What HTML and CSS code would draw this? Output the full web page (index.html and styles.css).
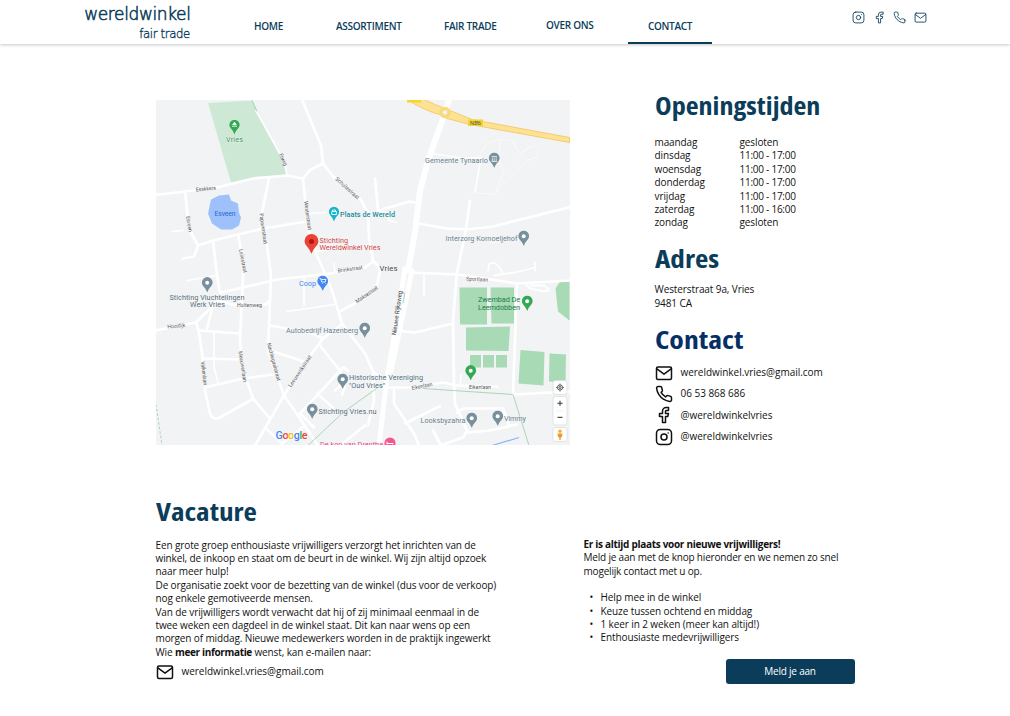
FILE: index.html
```html
<!DOCTYPE html>
<html lang="nl">
<head>
<meta charset="utf-8">
<title>Wereldwinkel Vries - Contact</title>
<link rel="stylesheet" href="styles.css">
</head>
<body>
<svg class="defs" width="0" height="0" aria-hidden="true">
  <symbol id="i-mail" viewBox="0 0 24 24"><rect x="2" y="4" width="20" height="16.500" rx="2"/><path d="M2.500 6.500 12 13.500l9.500-7"/></symbol>
  <symbol id="i-phone" viewBox="0 0 24 24"><path d="M22 16.920v3a2 2 0 0 1-2.180 2 19.790 19.790 0 0 1-8.630-3.070 19.500 19.500 0 0 1-6-6 19.790 19.790 0 0 1-3.070-8.670A2 2 0 0 1 4.110 2h3a2 2 0 0 1 2 1.720c.127.960.361 1.903.700 2.810a2 2 0 0 1-.450 2.110L8.090 9.910a16 16 0 0 0 6 6l1.270-1.270a2 2 0 0 1 2.110-.450c.907.339 1.850.573 2.810.700A2 2 0 0 1 22 16.920z"/></symbol>
  <symbol id="i-fb" viewBox="0 0 24 24"><path d="M18 2h-3a5 5 0 0 0-5 5v3H6v4h4v8h4v-8h3l1-4h-4V7a1 1 0 0 1 1-1h3z"/></symbol>
  <symbol id="i-insta" viewBox="0 0 24 24"><rect x="2" y="2" width="20" height="20" rx="5"/><circle cx="12" cy="12" r="4"/><path d="M17.500 6.500h.010"/></symbol>
  <symbol id="pin" viewBox="0 0 12 17"><path d="M6 0a5.600 5.600 0 0 1 5.600 5.600C11.600 9.500 7.500 11 6.300 15.600H5.700C4.500 11 .400 9.500.400 5.600A5.600 5.600 0 0 1 6 0z"/></symbol>
</svg>

<header class="topbar">
  <a class="logo"><span class="logo-main">wereldwinkel</span><span class="logo-sub">fair trade</span></a>
  <nav class="nav">
    <a class="n-home">HOME</a><a class="n-assort">ASSORTIMENT</a><a class="n-fair">FAIR TRADE</a><a class="n-over">OVER ONS</a><a class="n-contact">CONTACT</a>
  </nav>
  <div class="social">
    <svg><use href="#i-insta"/></svg><svg><use href="#i-fb"/></svg><svg><use href="#i-phone"/></svg><svg><use href="#i-mail"/></svg>
  </div>
</header>

<main>
  <section class="top">
    <svg class="map" viewBox="156 99.500 414 345">
      <rect x="155" y="99" width="415" height="346" fill="#f1f3f4"/>
      <path fill="#cde8d5" d="M208 102.500 252 100 263 121 277 147 287 174 253 178 231 182z"/>
      <path fill="#9fc1fb" d="M211 199 219 195 229 194 231 200 238 203 239 212 241 217 239 225 232 229 221 229 212 223 208 213z"/>
      <g fill="#a8dab5">
        <path d="M459.500 287H487v37H460zM490.500 287H514v36H491.500zM466 327 510 326 508.500 350.500 466 350zM470 354.500H481V367H470zM483 354.500H494V367H483zM496 354.500H507V367H496zM520.500 349.500 544.500 351.500 543.500 385 518.500 383zM549.500 353 566 354 565.500 382 549 381zM569.500 281H560L555.500 288 558 311 569.500 320z"/>
      </g>
      <g class="roads">
        <g class="r3">
          <path d="M155 194.500 185 191 217 187 253 178 287 175 303 178 310 169.500 323 163"/>
          <path d="M302 99 321 145 323 163 333 176 360 198 368 212 369 238 373 260 380 268"/>
          <path class="thin" d="M256 110 277 148 285 163 287 175"/>
          <path d="M185 191 189 228 198 245 194 256 183 258M198 245 213 240 238 234 263 228 307 221"/>
          <path d="M303 178 308 228 317 255 325 273 332 290 342 323 365 353 373 371 383 379"/>
          <path d="M269 178 261 217 267 245 271 275 268 350 284 395 298 415 318 445"/>
          <path d="M238 234 244 265 243 277 240 337 242 367 253 398 270 418"/>
          <path d="M213 240 217 275 220 293M221 292 243 287 277 279 330 273 365 267 373 261"/>
          <path d="M155 330 196 322 218 300 232 304 266 304 270 299M213 305 207 328"/>
          <path d="M196 322 199 332 203 360 205 390 210 413Q212 419 218 418L252 399"/>
          <path d="M199 330 240 333M202 358 240 359M205 387 243 378 273 374"/>
          <path d="M255 445 284 395 308 358 323 338 343 323"/>
          <path d="M270 325 313 333 323 338M270 350 307 362M320 345 340 370M300 413 343 367 348 370M317 393 333 407M340 372 345 379 341 385 335 390M345 386 342 394"/>
          <path d="M265 427 282 443 305 425 298 415M300 413 314 427M340 311 365 297 377 285 380 270M340 445 365 425"/>
          <path d="M375 178 378 210 410 201 415 202M418 223 447 228 467 229 493 226 570 206.500M470 200 466 229 457 272 453 320 454 380 455 403 467 430 463 437 440 445M410 272 457 274 517 283 570 280"/>
          <path d="M517 283 513 394 570 391M395 330 415 332 453 323M385 387 410 387 443 382 457 385 497 386"/>
          <path d="M394 388 394 403 414 433 419 445M405 423 437 407 440 406M457 412 463 408 503 408 509 424M467 432 490 430 517 424M433 430 441 445M373 371 374 400 368 425"/>
          <path class="thin" d="M494 275 515 272 535 267M525 283 530 288 544 291 549 290 545 285 530 285M488 270 489 264Q494 259 501 269L503 274M535 270 535 262"/>
        </g>
        <g class="r2">
          <path d="M310 213 325 212M187 280 217 275M172 231 183 230M214 331 214 367 218 382M287 311 335 304M304 305 304 275M432 153 463 158 481 157 475 192M378 210 388 213 389 220 396 222M460 385 461 374M424 273 424 295M317 251 337 247M334 263 335 272"/>
        </g>
        <path class="r1" d="M475 192 495 194 504 171 499 160 500 139 512 140 520 153 533 145Q542 148 536 157L527 160 502 184 495 194M490 227 490 242 500 242M480 155 486 144 497 139"/>
        <path class="r5" d="M449 99 443 118 429 157 420 190 415 232 408 270"/>
        <path class="r7" d="M405 268 396 325 386 385 379 445M412 270 400 328 391 370"/>
      </g>
      <path d="M407 99Q426 111 440 114L447 118 470 124 569.500 142V137L472 119 450 110Q434 104 424 99z" fill="#fde293" stroke="#f4c35c" stroke-width=".8"/>
      <circle cx="445" cy="112" r="4" fill="#f1f3f4" stroke="#fad978" stroke-width="3.500"/>
      <path d="M407 99h14v3h-14z" fill="#f6d62c"/><rect x="468" y="119" width="15" height="6.500" fill="#f6d32b"/>
      <g fill="none" stroke="#8cc99b" stroke-width=".7">
        <path d="M308 445 343 412 382 384M423 388 513 394 529 445"/><path d="M156 404 162 445" stroke-dasharray="2.500 2"/><path d="M403 303 405 292M252 100 257 111"/>
      </g>
      <path d="M492 445 519 437" stroke="#8ab4f8" stroke-width="1.200"/>

      <g class="street">
        <text x="196" y="191" textLength="20" transform="rotate(-5 196 191)">Esakkers</text>
        <text x="279" y="154" textLength="13" transform="rotate(66 279 154)">Esweg</text>
        <text x="335" y="179" textLength="30" transform="rotate(42 335 179)">Schultestraat</text>
        <text x="304" y="201" textLength="29" transform="rotate(82 304 201)">Westerstraat</text>
        <text x="259.500" y="213" textLength="31" transform="rotate(82 259.500 213)">Papaverstraat</text>
        <text x="186" y="216" textLength="16" transform="rotate(80 186 216)">Esveen</text>
        <text x="239" y="249" textLength="24" transform="rotate(79 239 249)">Leliestraat</text>
        <text x="338" y="272" textLength="25" transform="rotate(-8 338 272)">Brinkstraat</text>
        <text x="357" y="303" textLength="26" transform="rotate(-35 357 303)">Marksestraat</text>
        <text x="237" y="306" textLength="25">Holtenweg</text>
        <text x="167.500" y="328" textLength="18" transform="rotate(-5 167.500 328)">Hooidijk</text>
        <text x="201" y="361" textLength="24" transform="rotate(84 201 361)">Valkenlaan</text>
        <text x="238.500" y="351" textLength="31" transform="rotate(81 238.500 351)">Meeuwenlaan</text>
        <text x="267" y="343" textLength="39" transform="rotate(75 267 343)">Nachtegaalstraat</text>
        <text x="291" y="387" textLength="37" transform="rotate(-56 291 387)">Leeuwerikstraat</text>
        <text x="466" y="280" textLength="22" transform="rotate(3 466 280)">Sportlaan</text>
        <text x="412" y="389.500" textLength="21" transform="rotate(-11 412 389.500)">Eikenlaan</text>
        <text x="469" y="388" textLength="22">Eikenlaan</text>
        <text class="shield" x="470" y="124.300" textLength="11">N386</text>
        <text class="major" x="396" y="335" textLength="45" transform="rotate(-82 396 335)">Nieuwe Rijksweg</text>
      </g>

      <use href="#pin" x="229" y="119" width="11" height="16" fill="#34a853"/>
      <path d="M234.500 121.500 236.500 124.500H232.500zM232 126h5" fill="#fff" stroke="#fff" stroke-width=".6"/>
      <use href="#pin" x="328.500" y="206" width="11" height="16" fill="#12b5cb"/>
      <path d="M331.800 211h4.600v3h-4.600zM332.500 211v-1.500h3v1.500" fill="none" stroke="#fff" stroke-width=".9"/>
      <use href="#pin" x="304" y="233.500" width="15" height="21" fill="#ea4335"/><circle cx="311.500" cy="241" r="2.500" fill="#b31412"/>
      <g fill="#78909c">
        <use href="#pin" x="488.500" y="152" width="11.500" height="16.500"/><use href="#pin" x="518" y="230" width="11.500" height="16.500"/>
        <use href="#pin" x="201.500" y="276.500" width="11.500" height="16.500"/><use href="#pin" x="359" y="322" width="11.500" height="16.500"/>
        <use href="#pin" x="337" y="373" width="11.500" height="16.500"/><use href="#pin" x="306.500" y="403" width="11.500" height="16.500"/>
        <use href="#pin" x="466" y="412" width="11.500" height="16.500"/><use href="#pin" x="492" y="410" width="11.500" height="16.500"/>
      </g>
      <path d="M491.500 156h5.500M492.300 157v4M494.200 157v4M496.200 157v4M491.500 161h5.500" stroke="#fff" stroke-width=".7"/>
      <g fill="#34a853"><use href="#pin" x="521.500" y="295" width="11.500" height="16.500"/><use href="#pin" x="465" y="364.500" width="11.500" height="16.500"/></g>
      <g fill="#fff"><circle cx="523.700" cy="235.800" r="2"/><circle cx="207.200" cy="282.200" r="2"/><circle cx="364.700" cy="327.700" r="2"/><circle cx="342.700" cy="378.700" r="2"/><circle cx="312.200" cy="408.700" r="2"/><circle cx="471.700" cy="417.700" r="2"/><circle cx="497.700" cy="415.700" r="2"/><circle cx="527.200" cy="300.700" r="2"/><circle cx="470.700" cy="370.200" r="2"/></g>
      <use href="#pin" x="317" y="275" width="11.500" height="16.500" fill="#4285f4"/>
      <path d="M319.500 278h1.200l1 3.500h3.500l.8-2.600h-4.800M322 283h.5M325 283h.5" fill="none" stroke="#fff" stroke-width=".9"/>
      <path d="M384.500 445v-2.500a5.500 5.500 0 0 1 11 0V445z" fill="#f6568f"/><path d="M387 444v-3M387 443h6v1" stroke="#fff" fill="none"/>

      <g class="poi">
        <text x="226" y="141" textLength="17" fill="#34945a">Vries</text>
        <text class="water" x="214.500" y="215" textLength="21" fill="#2868c8">Esveen</text>
        <text class="b" x="340" y="216.500" textLength="55" fill="#168b9a">Plaats de Wereld</text>
        <text x="319.500" y="242" textLength="28.500" fill="#d13e3e">Stichting</text>
        <text x="319.500" y="249.500" textLength="61" fill="#d13e3e">Wereldwinkel Vries</text>
        <text x="425" y="162.500" textLength="63" fill="#69818e">Gemeente Tynaarlo</text>
        <text x="445.500" y="240.500" textLength="72" fill="#69818e">Interzorg Kornoeljehof</text>
        <text class="town" x="379.500" y="270.500" textLength="18" fill="#45494d">Vries</text>
        <text x="299" y="285" textLength="17" fill="#4285f4">Coop</text>
        <text x="169.500" y="299" textLength="75" fill="#536d79">Stichting Vluchtelingen</text>
        <text x="190" y="306.500" textLength="35" fill="#536d79">Werk Vries</text>
        <text x="286" y="332.500" textLength="72" fill="#69818e">Autobedrijf Hazenberg</text>
        <text x="349" y="379.500" textLength="74" fill="#536d79">Historische Vereniging</text>
        <text x="349" y="387" textLength="36" fill="#536d79">"Oud Vries"</text>
        <text x="318.500" y="413.500" textLength="58" fill="#536d79">Stichting Vries.nu</text>
        <text x="420.500" y="422" textLength="45" fill="#69818e">Looksbyzahra</text>
        <text x="504" y="420" textLength="22" fill="#69818e">Vimmy</text>
        <text class="park" x="478" y="301" textLength="42">Zwembad De</text>
        <text class="park" x="478" y="309" textLength="42">Leemdobben</text>
        <text x="320" y="446.500" textLength="63" fill="#e6437c">De kop van Drenthe</text>
        <text class="g" x="275.500" y="438" textLength="32"><tspan fill="#4285f4">G</tspan><tspan fill="#ea4335">o</tspan><tspan fill="#fbbc04">o</tspan><tspan fill="#4285f4">g</tspan><tspan fill="#34a853">l</tspan><tspan fill="#ea4335">e</tspan></text>
      </g>
      <g class="ctl"><rect x="553" y="380" width="14" height="14" rx="2.500"/><rect x="553" y="396" width="14" height="28.500" rx="2.500"/><rect x="553" y="427" width="14" height="14" rx="2.500"/></g>
      <g fill="none" stroke="#555"><circle cx="560" cy="387" r="2.600"/><path d="M560 383v1.500M560 389.500v1.500M556 387h1.500M562.500 387h1.500" stroke-width=".8"/><circle cx="560" cy="387" r="1"/><path d="M557.500 402.800h5M560 400.300v5M557.500 416.800h5" stroke-width="1.300"/><path d="M556 410.300h8" stroke="#e6e6e6" stroke-width=".6"/></g>
      <circle cx="560" cy="430.800" r="1.700" fill="#efb02c"/><path d="M557.500 433h5l-.5 3.500h-1L560.500 439.500h-1L559 436.500h-1z" fill="#f29b24"/>
    </svg>

    <aside class="info">
      <h1 class="h-open">Openingstijden</h1>
      <dl class="hours">
        <dt>maandag</dt><dd>gesloten</dd>
        <dt>dinsdag</dt><dd class="time">11:00 - 17:00</dd>
        <dt>woensdag</dt><dd class="time">11:00 - 17:00</dd>
        <dt>donderdag</dt><dd class="time">11:00 - 17:00</dd>
        <dt>vrijdag</dt><dd class="time">11:00 - 17:00</dd>
        <dt>zaterdag</dt><dd class="time">11:00 - 16:00</dd>
        <dt>zondag</dt><dd>gesloten</dd>
      </dl>
      <h1 class="h-adres">Adres</h1>
      <p class="address">Westerstraat 9a, Vries<br>9481 CA</p>
      <h1 class="h-contact">Contact</h1>
      <ul class="contacts">
        <li><svg><use href="#i-mail"/></svg><span>wereldwinkel.vries@gmail.com</span></li>
        <li><svg><use href="#i-phone"/></svg><span>06 53 868 686</span></li>
        <li><svg><use href="#i-fb"/></svg><span>@wereldwinkelvries</span></li>
        <li><svg><use href="#i-insta"/></svg><span>@wereldwinkelvries</span></li>
      </ul>
    </aside>
  </section>

  <section class="bottom">
    <div class="vacature">
      <h1 class="h-vac">Vacature</h1>
      <p>Een grote groep enthousiaste vrijwilligers verzorgt het inrichten van de<br>winkel, de inkoop en staat om de beurt in de winkel. Wij zijn altijd opzoek<br>naar meer hulp!<br>De organisatie zoekt voor de bezetting van de winkel (dus voor de verkoop)<br>nog enkele gemotiveerde mensen.<br>Van de vrijwilligers wordt verwacht dat hij of zij minimaal eenmaal in de<br>twee weken een dagdeel in de winkel staat. Dit kan naar wens op een<br>morgen of middag. Nieuwe medewerkers worden in de praktijk ingewerkt<br>Wie <b>meer informatie</b> wenst, kan e-mailen naar:</p>
      <div class="mail"><svg><use href="#i-mail"/></svg><span>wereldwinkel.vries@gmail.com</span></div>
    </div>
    <div class="join">
      <p><b>Er is altijd plaats voor nieuwe vrijwilligers!</b><br>Meld je aan met de knop hieronder en we nemen zo snel<br>mogelijk contact met u op.</p>
      <ul class="tasks"><li>Help mee in de winkel</li><li>Keuze tussen ochtend en middag</li><li>1 keer in 2 weken (meer kan altijd!)</li><li>Enthousiaste medevrijwilligers</li></ul>
      <button class="cta">Meld je aan</button>
    </div>
  </section>
</main>
</body>
</html>
```
FILE: styles.css
```css
* { box-sizing: border-box; }
body { margin: 0; width: 1010px; height: 716px; overflow: hidden; background: #fff; color: #111; font: 10px/13.400px "Open Sans", "Noto Sans", sans-serif; letter-spacing: -.1px; }
h1, p, dl, dd, ul { margin: 0; padding: 0; list-style: none; }
.defs { position: absolute; }
svg { display: block; flex: none; }
.topbar { display: flex; height: 44px; background: #fff; box-shadow: 0 1px 3px rgba(0,0,0,.22); color: #0b3d5a; }
.logo { width: 190px; padding-top: 2px; display: flex; flex-direction: column; align-items: flex-end; font-family: "DejaVu Sans", sans-serif; font-weight: 200; -webkit-text-stroke: .6px #0b3d5a; }
.logo span { transform-origin: 100% 50%; white-space: nowrap; }
.logo-main { font-size: 18px; line-height: 24px; letter-spacing: -.4px; transform: scaleX(.945); }
.logo-sub { font-size: 12.500px; line-height: 15px; letter-spacing: -.4px; transform: scaleX(.94); -webkit-text-stroke-width: .35px; }
.nav { display: flex; width: 522px; font-weight: 600; font-size: 10px; letter-spacing: -.3px; }
.nav a { padding-top: 20px; white-space: nowrap; }
.n-home { margin-left: 64px; width: 82px; }
.n-assort { width: 108px; }
.n-fair { width: 102px; }
.nav .n-over { width: 82px; padding-top: 19px; }
.nav .n-contact { width: 84px; text-align: center; border-bottom: 2px solid #0b3d5a; }
.social { display: flex; gap: 7.500px; padding: 11px 0 0 140px; }
.social svg { width: 13px; height: 13px; }
.social svg, .contacts svg, .mail svg { fill: none; stroke: currentColor; stroke-width: 2; stroke-linecap: round; stroke-linejoin: round; }
.social svg { stroke-width: 1.600; }
.top { display: flex; padding: 55.500px 0 0 155.500px; height: 452px; }
.map { width: 414px; height: 345px; }
.info { margin-left: 85px; }
h1 { width: max-content; font-size: 24px; line-height: 30px; font-weight: 700; color: #0b3d5a; font-stretch: 75%; letter-spacing: 0; white-space: nowrap; transform-origin: 0 50%; transform: scaleX(1.170); }
.info h1 { margin-top: -9px; }
.hours { display: grid; grid-template-columns: 85px auto; margin-top: 15.500px; }
.time { letter-spacing: -.25px; }
.info .h-adres { margin-top: 14.500px; transform: scaleX(1.215); }
.address { margin-top: 9px; }
.info .h-contact { color: #062f68; margin-top: 15px; transform: scaleX(1.24); }
.contacts { margin-top: 7px; letter-spacing: -.03px; }
.contacts li { display: flex; align-items: center; height: 21.300px; gap: 8px; }
.contacts svg, .mail svg { width: 18px; height: 18px; }
.bottom { display: flex; padding-left: 155.500px; }
.vacature { width: 428px; padding-top: 1px; }
.h-vac { transform: scaleX(1.215); }
.vacature p { margin-top: 11.500px; white-space: nowrap; letter-spacing: -.115px; }
.vacature b { letter-spacing: -.35px; }
.mail { display: flex; align-items: center; gap: 8px; margin-top: 4px; letter-spacing: -.03px; }
.join { padding-top: 42px; width: 271px; }
.join p { white-space: nowrap; letter-spacing: -.19px; }
.join b { letter-spacing: -.3px; }
.tasks { margin: 13px 0 0 17px; }
.tasks li { position: relative; }
.tasks li::before { content: "•"; position: absolute; left: -11px; }
.cta { display: block; margin: 14px 0 0 142px; width: 129px; height: 25px; border: 0; border-radius: 3px; background: #0b3d5a; color: #fff; font: inherit; letter-spacing: -.2px; }
.roads path { fill: none; stroke: #fff; stroke-linejoin: round; stroke-linecap: round; }
.r3 path { stroke-width: 2.700; }
.r3 .thin { stroke-width: 1.800; }
.r2 path { stroke-width: 1.600; }
.roads .r1 { stroke-width: .9; stroke: #fbfbfb; }
.roads .r5 { stroke-width: 6; }
.roads .r7 { stroke-width: 5; }
.map text { font-family: Roboto, sans-serif; letter-spacing: 0; }
.street text { font-size: 5.400px; fill: #5c5c5c; stroke: #f5f6f7; stroke-width: .8px; paint-order: stroke; }
.street .major { font-size: 6.300px; fill: #444; }
.street .shield { stroke: none; }
.poi text { font-size: 7.300px; stroke: #f8f9fa; stroke-width: .6px; paint-order: stroke; }
.poi .water { stroke: none; font-size: 6.800px; }
.poi .park { stroke: none; fill: #168043; }
.poi .town { font-size: 7.800px; }
.poi .b { font-weight: 500; }
.poi .g { font-size: 10.800px; font-weight: 500; stroke-width: 1px; }
.ctl rect { fill: #fff; stroke: #d8d8d8; stroke-width: .7px; }
```
